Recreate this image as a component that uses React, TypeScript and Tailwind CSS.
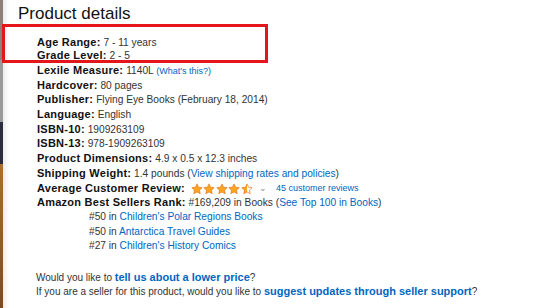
import { useState } from "react";

type Row = { label: string; value: React.ReactNode; h?: string };

function Link({ children, small }: { children: React.ReactNode; small?: boolean }) {
  return (
    <span className={small ? "text-[#0066c0] text-[9px]" : "text-[#0066c0]"}>{children}</span>
  );
}

function Star({ fill }: { fill: "full" | "half" }) {
  return (
    <svg width="12" height="12" viewBox="0 0 24 24">
      <defs>
        <linearGradient id="half">
          <stop offset="50%" stopColor="#ffa41c" />
          <stop offset="50%" stopColor="#ffffff" />
        </linearGradient>
      </defs>
      <path
        d="M12 1.8l3.1 6.6 7.2.9-5.3 5 1.4 7.1L12 17.9l-6.4 3.5 1.4-7.1-5.3-5 7.2-.9z"
        fill={fill === "full" ? "#ffa41c" : "url(#half)"}
        stroke="#de7921"
        strokeWidth="1.4"
        strokeLinejoin="round"
      />
    </svg>
  );
}

function App() {
  const [rating] = useState<number>(4.5);

  const rows: Row[] = [
    { label: "Age Range:", value: "7 - 11 years", h: "h-[13px]" },
    { label: "Grade Level:", value: "2 - 5", h: "h-[15px]" },
    {
      label: "Lexile Measure:",
      value: (
        <>
          1140L <Link small>(What's this?)</Link>
        </>
      ),
    },
    { label: "Hardcover:", value: "80 pages" },
    { label: "Publisher:", value: "Flying Eye Books (February 18, 2014)" },
    { label: "Language:", value: "English" },
    { label: "ISBN-10:", value: "1909263109" },
    { label: "ISBN-13:", value: "978-1909263109" },
    { label: "Product Dimensions:", value: "4.9 x 0.5 x 12.3 inches" },
    {
      label: "Shipping Weight:",
      value: (
        <>
          1.4 pounds (<Link>View shipping rates and policies</Link>)
        </>
      ),
    },
    {
      label: "Average Customer Review:",
      value: (
        <span className="ml-[3px] inline-flex items-center align-middle gap-[0.5px] h-[12px]">
          {[1, 2, 3, 4, 5].map((i) => (
            <Star key={i} fill={i <= Math.floor(rating) ? "full" : "half"} />
          ))}
          <span className="ml-[6px] mr-[8px] text-[#888] text-[9px]">⌄</span>
          <Link small>45 customer reviews</Link>
        </span>
      ),
    },
    {
      label: "Amazon Best Sellers Rank:",
      value: (
        <>
          #169,209 in Books (<Link>See Top 100 in Books</Link>)
        </>
      ),
    },
  ];

  const ranks = [
    { n: "#50", cat: "Children's Polar Regions Books" },
    { n: "#50", cat: "Antarctica Travel Guides" },
    { n: "#27", cat: "Children's History Comics" },
  ];

  return (
    <div className="relative w-[542px] h-[308px] bg-white flex overflow-hidden font-['Liberation_Sans',Arial,sans-serif]">
      {/* strip of photo on the left edge */}
      <div className="w-[3px] flex flex-col shrink-0">
        <div className="h-[60px] bg-[#8c8079]"></div>
        <div className="h-[62px] bg-[#9a9a9a]"></div>
        <div className="h-[42px] bg-[#2b2c3d]"></div>
        <div className="flex-1 bg-gradient-to-b from-[#a9702f] to-[#7b4a23]"></div>
      </div>
      <div className="w-[6px] shrink-0 bg-gradient-to-r from-[#ececec] to-white"></div>

      <div className="flex flex-col">
        <div className="ml-[9px] mt-[3px] text-[17px] leading-[22px] text-[#111]">Product details</div>
        <div className="ml-[28px] mt-[10px] flex flex-col text-[10.2px] leading-[14.7px] text-[#333]">
          {rows.map((r) => (
            <div key={r.label} className={(r.h ?? "h-[14.7px]") + " whitespace-nowrap"}>
              <span className="font-bold text-[11px] tracking-[0.25px] text-[#111]">{r.label}</span>{" "}
              {r.value}
            </div>
          ))}
          {ranks.map((r, i) => (
            <div key={i} className="h-[14.7px] ml-[52px] whitespace-nowrap">
              {r.n} in <Link>{r.cat}</Link>
            </div>
          ))}
        </div>
        <div className="ml-[27px] mt-[16px] flex flex-col text-[10px] leading-[14px] text-[#333]">
          <div className="h-[14px] whitespace-nowrap">
            Would you like to{" "}
            <span className="text-[#0066c0] font-bold text-[11px]">tell us about a lower price</span>?
          </div>
          <div className="h-[14px] whitespace-nowrap">
            If you are a seller for this product, would you like to{" "}
            <span className="text-[#0066c0] font-bold text-[11px]">
              suggest updates through seller support
            </span>
            ?
          </div>
        </div>
      </div>

      {/* red highlight box */}
      <div className="absolute left-[2px] top-[24px] w-[266px] h-[39px] border-[3px] border-[#e4151b]"></div>
    </div>
  );
}

export default App;
